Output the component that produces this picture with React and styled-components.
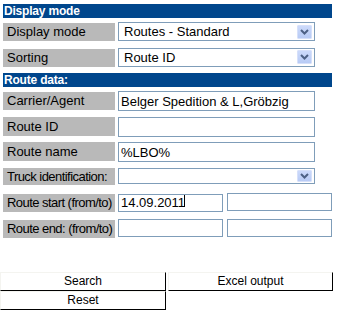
import React from 'react';
import styled, { createGlobalStyle } from 'styled-components';

const GlobalStyle = createGlobalStyle`
  body {
    margin: 0;
    background: #fff;
    font-family: 'Liberation Sans', Arial, sans-serif;
  }
`;

const Page = styled.div`
  width: 341px;
  padding-top: 4px;
`;

const Form = styled.div`
  display: flex;
  flex-direction: column;
  gap: 5.5px;
  margin-left: 3px;
  width: 329px;
`;

const SectionHeader = styled.div`
  height: 14px;
  line-height: 14px;
  background-color: #00468c;
  color: #fff;
  font-size: 12px;
  font-weight: bold;
  padding-left: 1px;
  margin-bottom: -1.5px;
  letter-spacing: -0.2px;
`;

const Row = styled.div`
  display: grid;
  grid-template-columns: 112px 1fr;
  column-gap: 3px;
  align-items: start;
  height: 20px;
`;

const Label = styled.div`
  height: ${props => props.h || 19}px;
  margin-top: ${props => props.top || 0}px;
  line-height: ${props => props.h || 19}px;
  background-color: #b9b9b9;
  color: #000;
  font-size: 13px;
  letter-spacing: ${props => (props.tight ? '-0.55px' : '0')};
  padding-left: 4px;
  white-space: nowrap;
  overflow: hidden;
`;

const TextInput = styled.input`
  box-sizing: border-box;
  width: ${props => props.w || 197}px;
  height: ${props => props.h || 20}px;
  border: 1px solid #7f9db9;
  padding: 0 0 0 2px;
  margin: 0;
  font-family: 'Liberation Sans', Arial, sans-serif;
  font-size: 13px;
  color: #000;
  background: #fff;
  outline: none;
`;

const DateGroup = styled.div`
  display: flex;
  gap: 4px;
`;

const CaretWrap = styled.div`
  position: relative;
`;

const Caret = styled.span`
  position: absolute;
  left: 66px;
  top: 2px;
  width: 1px;
  height: 12px;
  background: #000;
`;

const SelectBox = styled.div`
  box-sizing: border-box;
  width: 197px;
  height: ${props => props.h || 19}px;
  border: 1px solid #7f9db9;
  background: #fff;
  display: flex;
  align-items: center;
  justify-content: space-between;
  padding: 0 2px 0 5px;
  font-size: 13px;
  color: #000;
`;

const ArrowButton = styled.div`
  box-sizing: border-box;
  width: 15px;
  height: ${props => props.h || 14}px;
  border: 1px solid #d6e0fa;
  border-radius: 1px;
  background: linear-gradient(#ccdafb, #b8cbf5);
  display: flex;
  align-items: center;
  justify-content: center;
`;

const Buttons = styled.div`
  display: grid;
  grid-template-columns: 166px 165px;
  column-gap: 2px;
  margin-top: 33px;
`;

const Button = styled.div`
  box-sizing: border-box;
  height: ${props => props.h || 19}px;
  border-top: 1px solid #f4f4f0;
  border-left: 1px solid #f4f4f0;
  border-right: 1px solid #000;
  border-bottom: 1px solid #000;
  background: #fff;
  font-size: 12px;
  color: #000;
  text-align: center;
  line-height: ${props => (props.h || 19) - 2}px;
`;

const Chevron = () => (
  <svg width="9" height="6" viewBox="0 0 9 6">
    <path d="M1 1 L4.5 4.5 L8 1" fill="none" stroke="#4d6185" strokeWidth="2" />
  </svg>
);

const Select = ({ value, h, arrowH }) => (
  <SelectBox h={h}>
    <span>{value}</span>
    <ArrowButton h={arrowH}>
      <Chevron />
    </ArrowButton>
  </SelectBox>
);

const App = () => {
  return (
    <Page>
      <GlobalStyle />
      <Form>
        <SectionHeader>Display mode</SectionHeader>
        <Row>
          <Label top={1} h={18}>Display mode</Label>
          <Select value="Routes - Standard" />
        </Row>
        <Row>
          <Label top={1} h={18}>Sorting</Label>
          <Select value="Route ID" />
        </Row>
        <SectionHeader>Route data:</SectionHeader>
        <Row>
          <Label top={1} h={18}>Carrier/Agent</Label>
          <TextInput readOnly value="Belger Spedition & L,Gröbzig" />
        </Row>
        <Row>
          <Label>Route ID</Label>
          <TextInput readOnly value="" />
        </Row>
        <Row>
          <Label>Route name</Label>
          <TextInput readOnly value="%LBO%" />
        </Row>
        <Row>
          <Label h={17} tight>Truck identification:</Label>
          <Select value="" h={16} arrowH={12} />
        </Row>
        <Row>
          <Label top={1} h={18} tight>Route start (from/to)</Label>
          <DateGroup>
            <CaretWrap>
              <TextInput readOnly w={105} h={18} value="14.09.2011" />
              <Caret />
            </CaretWrap>
            <TextInput readOnly w={105} h={18} value="" />
          </DateGroup>
        </Row>
        <Row>
          <Label top={1} h={18} tight>Route end: (from/to)</Label>
          <DateGroup>
            <TextInput readOnly w={105} h={18} value="" />
            <TextInput readOnly w={105} h={18} value="" />
          </DateGroup>
        </Row>
      </Form>
      <Buttons>
        <Button>Search</Button>
        <Button>Excel output</Button>
        <Button>Reset</Button>
      </Buttons>
    </Page>
  );
};

export default App;
